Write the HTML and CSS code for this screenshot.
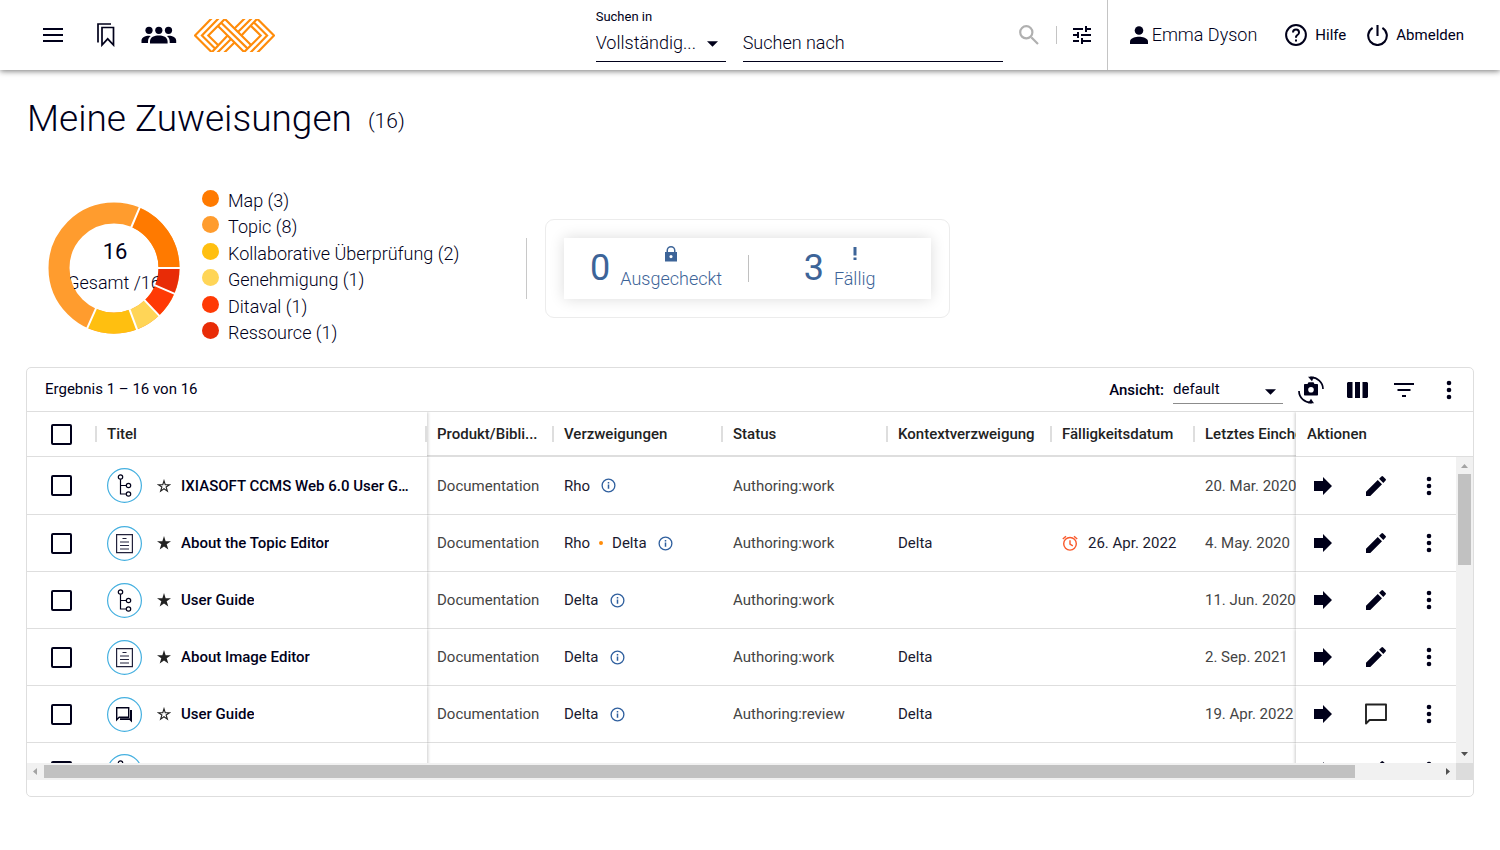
FILE: index.html
```html
<!DOCTYPE html>
<html lang="de">
<head>
<meta charset="utf-8">
<title>Meine Zuweisungen</title>
<link rel="stylesheet" href="styles.css">
</head>
<body>
<svg class="sprite" aria-hidden="true">
  <symbol id="i-arrow" viewBox="0 0 20 20"><path d="M1 5h9V1l9 9-9 9v-4H1z"/></symbol>
  <symbol id="i-pencil" viewBox="0 0 24 24"><path d="M2 17.750V22h4.250L18 10.250 13.750 6 2 17.750zM21.600 6.600a1.200 1.200 0 0 0 0-1.700L19.100 2.400a1.200 1.200 0 0 0-1.700 0L15.100 4.700l4.200 4.200 2.300-2.300z"/></symbol>
  <symbol id="i-more" viewBox="0 0 24 24"><circle cx="12" cy="5" r="2.300"/><circle cx="12" cy="12" r="2.300"/><circle cx="12" cy="19" r="2.300"/></symbol>
  <symbol id="i-comment" viewBox="0 0 24 24"><path fill="none" stroke="#222" stroke-width="1.900" stroke-linejoin="round" d="M2 2.500h20v15.500H5.500L2 21.500z"/></symbol>
  <symbol id="i-caret" viewBox="0 0 12 6"><path d="M0 0h12L6 6z"/></symbol>
  <symbol id="i-star" viewBox="0 0 24 24"><path d="M12 17.800 19.400 23l-2.800-8.900L24 9h-9.200L12 0 9.200 9H0l7.400 5.100L4.600 23z"/></symbol>
  <symbol id="i-star-o" viewBox="0 0 24 24"><path fill="none" stroke="currentColor" stroke-width="1.900" d="M12 16.700 17.800 20.900l-2.200-7.200L21.500 9.800h-7.400L12 3 9.900 9.800H2.500l5.900 3.900-2.200 7.200z"/></symbol>
  <symbol id="i-info" viewBox="0 0 16 16"><circle cx="8" cy="8" r="6.800" fill="none" stroke="currentColor" stroke-width="1.400"/><path d="M7.200 7h1.600v4.500H7.200zM7.200 4.300h1.600v1.500H7.200z"/></symbol>
  <symbol id="i-map" viewBox="0 0 35 35"><circle class="ring" cx="17.500" cy="17.500" r="16.900"/><g fill="none" stroke="#00001a" stroke-width="1.200"><circle cx="13.500" cy="9" r="2.200"/><circle cx="21.500" cy="17.500" r="2.200"/><circle cx="21.500" cy="26" r="2.200"/><path d="M13.500 11.200V26h5.800M13.500 17.500h5.800"/></g></symbol>
  <symbol id="i-topic" viewBox="0 0 35 35"><circle class="ring" cx="17.500" cy="17.500" r="16.900"/><path fill="none" stroke="#22223c" stroke-width="1.200" d="M9.600 8.600h15.800v18H9.600zM15.500 12.500h4M13 16h9M13 19.500h9M13 23h9"/></symbol>
  <symbol id="i-review" viewBox="0 0 35 35"><circle class="ring" cx="17.500" cy="17.500" r="16.900"/><path fill="none" stroke="#00001a" stroke-width="1.400" d="M9.700 10.700h12v9.600H12.200l-2.500 2.500z"/><path d="M23 13h2v12.500L22.500 23H13v-1.700h10z"/></symbol>
</svg>

<header class="topbar">
  <nav class="main-nav" aria-label="Hauptnavigation">
    <button class="icon-btn" aria-label="Menü"><svg width="20" height="14" viewBox="0 0 20 14"><path d="M0 0h20v2H0zM0 6h20v2H0zM0 12h20v2H0z"/></svg></button>
    <button class="icon-btn nav-marks" aria-label="Lesezeichen"><svg width="18" height="24" viewBox="0 0 18 24"><path fill="none" stroke="currentColor" stroke-width="1.700" d="M1 19.500V1h13M5 4.500h11.500v17.500L10.700 15.800 5 22z"/></svg></button>
    <button class="icon-btn nav-groups" aria-label="Gruppen"><svg width="36" height="18" viewBox="0 0 36 18"><circle cx="8" cy="4.300" r="3.600"/><circle cx="17.800" cy="4.300" r="3.600"/><circle cx="27.500" cy="4.300" r="3.600"/><path d="M9 17.500v-2c0-4.500 4.500-6 8.800-6s8.800 1.500 8.800 6v2zM.5 17v-2.500c0-3 3.500-4.700 7.500-4.700l1.800.2c-1.700 1.300-2.800 3-2.800 5.500V17zM35.200 17v-2.500c0-3-3.500-4.700-7.500-4.700l-1.800.2c1.700 1.300 2.800 3 2.800 5.500V17z"/></svg></button>
    <a class="logo" href="#" aria-label="Startseite"><svg width="81" height="33" viewBox="193.500 19 82 33"><g fill="none" stroke="#ff8c0a" stroke-width="2.200"><path d="M211.500 18 194.500 35.500 211.500 52.500 227.500 35.500M218.500 18 201.500 35.500 214.500 48.500M225.500 18 208 35.500 217.800 45.200M217 53 231 39M224 53 234.500 42.500"/><path d="M225 19 251.200 45.200M221 22.500 247.800 48.800M217.800 25.800 244.500 52.500"/><path d="M257.500 53 274.500 35.500 257.500 18.500 241.500 35.500M250.500 53 267.500 35.500 254.500 22.500M243.500 53 261 35.500 251.200 25.800M252 18 238 32M245 18 234.500 28.500"/></g></svg></a>
  </nav>
  <form class="search">
    <div class="scope">
      <label for="scope">Suchen in</label>
      <div class="select-wrap"><select id="scope"><option>Vollständig...</option></select><svg class="caret" width="11" height="6"><use href="#i-caret"/></svg></div>
    </div>
    <input class="query" type="text" aria-label="Suchen nach" placeholder="Suchen nach">
    <button class="icon-btn find" type="button" aria-label="Suchen"><svg width="20" height="20" viewBox="0 0 20 20"><path fill="none" stroke="currentColor" stroke-width="2.200" d="M12.500 12.500 19 19M7.300 1.200a6.100 6.100 0 1 1 0 12.200 6.100 6.100 0 0 1 0-12.200z"/></svg></button>
    <button class="icon-btn tune" type="button" aria-label="Erweiterte Suche"><svg width="18" height="18" viewBox="3 3 18 18"><path d="M3 17v2h6v-2H3zM3 5v2h10V5H3zm10 16v-2h8v-2h-8v-2h-2v6h2zM7 9v2H3v2h4v2h2V9H7zm14 4v-2H11v2h10zm-6-4h2V7h4V5h-4V3h-2v6z"/></svg></button>
  </form>
  <div class="account">
    <a class="user" href="#"><svg width="18" height="18" viewBox="0 0 18 18"><circle cx="9" cy="4.500" r="4.300"/><path d="M0 18v-2.500C0 12 6 10.700 9 10.700s9 1.300 9 4.800V18z"/></svg>Emma Dyson</a>
    <a class="link help" href="#"><svg width="22" height="22" viewBox="0 0 22 22"><circle cx="11" cy="11" r="9.900" fill="none" stroke="currentColor" stroke-width="2"/><path d="M10 15.500h2v2h-2zM11 4.500a4 4 0 0 0-4 4h2a2 2 0 1 1 4 0c0 2-3 1.800-3 5.200h2c0-2.300 3-2.600 3-5.200a4 4 0 0 0-4-4z"/></svg>Hilfe</a>
    <a class="link" href="#"><svg width="21" height="22" viewBox="0 0 21 22"><path fill="none" stroke="currentColor" stroke-width="2.100" d="M10.500 1v11M5.600 3.800a9.300 9.300 0 1 0 9.800 0"/></svg>Abmelden</a>
  </div>
</header>

<main>
  <h1>Meine Zuweisungen <span class="total">(16)</span></h1>

  <section class="summary">
    <svg class="donut" width="132" height="132" viewBox="0 0 132 132" role="img" aria-label="Zuweisungen nach Typ">
      <defs><clipPath id="hole"><circle cx="66" cy="66" r="45"/></clipPath></defs>
      <g fill="none" stroke-width="21">
        <circle cx="66" cy="66" r="55" stroke="#ff9c2e"/>
        <path stroke="#ff7a00" d="M87.490 15.370A55 55 0 0 1 121 66"/>
        <path stroke="#e82c07" d="M121 66A55 55 0 0 1 116.630 87.490"/>
        <path stroke="#ff3a05" d="M116.630 87.490A55 55 0 0 1 103.860 105.900"/>
        <path stroke="#ffd557" d="M103.860 105.900A55 55 0 0 1 85.260 117.520"/>
        <path stroke="#ffbf10" d="M85.260 117.520A55 55 0 0 1 43.630 116.240"/>
      </g>
      <path stroke="#fff" stroke-width="2" d="M110 66h22M106.500 83.190l22.090 9.380M96.290 97.920l16.520 17.410M81.410 107.210l8.400 22.480M48.100 106.190l-9.760 21.920M83.190 25.500l9.380-22.090"/>
      <g clip-path="url(#hole)" text-anchor="middle"><text class="donut-num" x="67" y="57">16</text><text class="donut-cap" x="66" y="87">Gesamt /16</text></g>
    </svg>
    <ul class="legend">
      <li><i class="dot map"></i>Map (3)</li>
      <li><i class="dot topic"></i>Topic (8)</li>
      <li><i class="dot collab"></i>Kollaborative Überprüfung (2)</li>
      <li><i class="dot approval"></i>Genehmigung (1)</li>
      <li><i class="dot ditaval"></i>Ditaval (1)</li>
      <li><i class="dot resource"></i>Ressource (1)</li>
    </ul>
    <div class="rule"></div>
    <div class="stats">
      <div class="stats-inner">
        <button class="stat"><span class="stat-num">0</span><span class="stat-text"><svg width="12" height="16" viewBox="0 0 12 16"><path fill-rule="evenodd" d="M0 6h1.500V4.500a4.500 4.500 0 0 1 9 0V6H12v9.500H0zM3 6h6V4.500a3 3 0 0 0-6 0zM6 9a1.600 1.600 0 1 0 0 3.200A1.600 1.600 0 0 0 6 9z"/></svg>Ausgecheckt</span></button>
        <button class="stat"><span class="stat-num">3</span><span class="stat-text"><svg width="4" height="16" viewBox="0 0 4 16"><path d="M.5 1h3v8.500h-3zM.5 11.500h3v2.500h-3z"/></svg>Fällig</span></button>
      </div>
    </div>
  </section>

  <section class="card">
    <div class="toolbar">
      <span class="range">Ergebnis 1 – 16 von 16</span>
      <label class="view-label" for="view">Ansicht:</label>
      <div class="select-wrap view"><select id="view"><option>default</option></select><svg class="caret" width="11" height="6"><use href="#i-caret"/></svg></div>
      <button class="icon-btn" aria-label="Ansicht speichern"><svg width="26" height="28" viewBox="0 0 26 28"><path fill-rule="evenodd" d="M7 8h2.500l1-1.800h5l1 1.800H19c.6 0 1 .4 1 1v9.500c0 .6-.4 1-1 1H7c-.6 0-1-.4-1-1V9c0-.6.400-1 1-1zm6 3a2.800 2.800 0 1 0 0 5.600 2.800 2.800 0 0 0 0-5.600z"/><path fill="none" stroke="currentColor" stroke-width="1.700" d="M12 1.500c7.500-.5 13 5 13 11.500M14 26.500C6.500 27 1 21.500 1 15"/><path d="M10 .8h6l-2 4.500zM16 27.200h-6l3-4.500z"/></svg></button>
      <button class="icon-btn" aria-label="Spalten"><svg width="21" height="16" viewBox="0 0 21 16"><path d="M1 0h4.500v16H1l-1-1V1zM8 0h5v16H8zM15.500 0H20l1 1v14l-1 1h-4.500z"/></svg></button>
      <button class="icon-btn wide" aria-label="Filter"><svg width="20" height="14" viewBox="0 0 20 14"><path d="M0 0h20v2H0zM3.500 6h13v2h-13zM8 12h4v2H8z"/></svg></button>
      <button class="icon-btn" aria-label="Mehr"><svg width="24" height="24"><use href="#i-more"/></svg></button>
    </div>

    <div class="grid">
      <div class="viewport">
        <table>
          <colgroup><col class="c-check"><col class="c-title"><col class="c-product"><col class="c-branch"><col class="c-status"><col class="c-context"><col class="c-due"><col class="c-last"><col class="c-actions"></colgroup>
          <thead>
            <tr>
              <th class="check"><input type="checkbox" aria-label="Alle auswählen"></th>
              <th class="title"><span class="bar end">Titel</span></th>
              <th class="thick first">Produkt/Bibli...</th>
              <th class="thick"><span class="bar">Verzweigungen</span></th>
              <th class="thick"><span class="bar">Status</span></th>
              <th class="thick"><span class="bar">Kontextverzweigung</span></th>
              <th class="thick"><span class="bar">Fälligkeitsdatum</span></th>
              <th class="thick"><span class="bar">Letztes Einchecken</span></th>
              <th class="actions">Aktionen</th>
            </tr>
          </thead>
          <tbody>
            <tr>
              <td class="check"><input type="checkbox" aria-label="Auswählen"></td>
              <td class="title"><div class="name"><svg class="type"><use href="#i-map"/></svg><svg class="star"><use href="#i-star-o"/></svg><a href="#">IXIASOFT CCMS Web 6.0 User Guide</a></div></td>
              <td class="first">Documentation</td>
              <td class="dark"><div class="branch">Rho<svg class="info"><use href="#i-info"/></svg></div></td>
              <td>Authoring:work</td><td class="dark"></td><td class="dark"></td><td>20. Mar. 2020</td>
              <td class="actions"><div class="acts"><button class="icon-btn" aria-label="Öffnen"><svg><use href="#i-arrow"/></svg></button><button class="icon-btn edit" aria-label="Bearbeiten"><svg><use href="#i-pencil"/></svg></button><button class="icon-btn more" aria-label="Mehr"><svg><use href="#i-more"/></svg></button></div></td>
            </tr>
            <tr>
              <td class="check"><input type="checkbox" aria-label="Auswählen"></td>
              <td class="title"><div class="name"><svg class="type"><use href="#i-topic"/></svg><svg class="star"><use href="#i-star"/></svg><a href="#">About the Topic Editor</a></div></td>
              <td class="first">Documentation</td>
              <td class="dark"><div class="branch">Rho<span class="sep"></span>Delta<svg class="info"><use href="#i-info"/></svg></div></td>
              <td>Authoring:work</td><td class="dark">Delta</td>
              <td class="dark"><div class="due"><svg width="16" height="16" viewBox="0 0 16 16"><g fill="none" stroke="#f9592b" stroke-width="1.400"><circle cx="8" cy="8.800" r="6.300"/><path d="M8 5.200v4l2.800 1.700M.8 4 4 1.200M15.200 4 12 1.200"/></g></svg>26. Apr. 2022</div></td>
              <td>4. May. 2020</td>
              <td class="actions"><div class="acts"><button class="icon-btn" aria-label="Öffnen"><svg><use href="#i-arrow"/></svg></button><button class="icon-btn edit" aria-label="Bearbeiten"><svg><use href="#i-pencil"/></svg></button><button class="icon-btn more" aria-label="Mehr"><svg><use href="#i-more"/></svg></button></div></td>
            </tr>
            <tr>
              <td class="check"><input type="checkbox" aria-label="Auswählen"></td>
              <td class="title"><div class="name"><svg class="type"><use href="#i-map"/></svg><svg class="star"><use href="#i-star"/></svg><a href="#">User Guide</a></div></td>
              <td class="first">Documentation</td>
              <td class="dark"><div class="branch">Delta<svg class="info"><use href="#i-info"/></svg></div></td>
              <td>Authoring:work</td><td class="dark"></td><td class="dark"></td><td>11. Jun. 2020</td>
              <td class="actions"><div class="acts"><button class="icon-btn" aria-label="Öffnen"><svg><use href="#i-arrow"/></svg></button><button class="icon-btn edit" aria-label="Bearbeiten"><svg><use href="#i-pencil"/></svg></button><button class="icon-btn more" aria-label="Mehr"><svg><use href="#i-more"/></svg></button></div></td>
            </tr>
            <tr>
              <td class="check"><input type="checkbox" aria-label="Auswählen"></td>
              <td class="title"><div class="name"><svg class="type"><use href="#i-topic"/></svg><svg class="star"><use href="#i-star"/></svg><a href="#">About Image Editor</a></div></td>
              <td class="first">Documentation</td>
              <td class="dark"><div class="branch">Delta<svg class="info"><use href="#i-info"/></svg></div></td>
              <td>Authoring:work</td><td class="dark">Delta</td><td class="dark"></td><td>2. Sep. 2021</td>
              <td class="actions"><div class="acts"><button class="icon-btn" aria-label="Öffnen"><svg><use href="#i-arrow"/></svg></button><button class="icon-btn edit" aria-label="Bearbeiten"><svg><use href="#i-pencil"/></svg></button><button class="icon-btn more" aria-label="Mehr"><svg><use href="#i-more"/></svg></button></div></td>
            </tr>
            <tr>
              <td class="check"><input type="checkbox" aria-label="Auswählen"></td>
              <td class="title"><div class="name"><svg class="type"><use href="#i-review"/></svg><svg class="star"><use href="#i-star-o"/></svg><a href="#">User Guide</a></div></td>
              <td class="first">Documentation</td>
              <td class="dark"><div class="branch">Delta<svg class="info"><use href="#i-info"/></svg></div></td>
              <td>Authoring:review</td><td class="dark">Delta</td><td class="dark"></td><td>19. Apr. 2022</td>
              <td class="actions"><div class="acts"><button class="icon-btn" aria-label="Öffnen"><svg><use href="#i-arrow"/></svg></button><button class="icon-btn edit" aria-label="Kommentieren"><svg><use href="#i-comment"/></svg></button><button class="icon-btn more" aria-label="Mehr"><svg><use href="#i-more"/></svg></button></div></td>
            </tr>
            <tr>
              <td class="check"><input type="checkbox" aria-label="Auswählen"></td>
              <td class="title"><div class="name"><svg class="type"><use href="#i-map"/></svg></div></td>
              <td class="first"></td><td class="dark"></td><td></td><td class="dark"></td><td class="dark"></td><td></td>
              <td class="actions"><div class="acts"><button class="icon-btn" aria-label="Öffnen"><svg><use href="#i-arrow"/></svg></button><button class="icon-btn edit" aria-label="Bearbeiten"><svg><use href="#i-pencil"/></svg></button><button class="icon-btn more" aria-label="Mehr"><svg><use href="#i-more"/></svg></button></div></td>
            </tr>
          </tbody>
        </table>
      </div>
      <div class="vscroll" aria-hidden="true">
        <div class="vhead"></div>
        <div class="vtrack"><svg width="7" height="4" viewBox="0 0 7 4"><path fill="#a3a3a3" d="M0 4 3.500 0 7 4z"/></svg><div class="vthumb"></div><svg class="down" width="7" height="4" viewBox="0 0 7 4"><path fill="#505050" d="M0 0h7L3.500 4z"/></svg></div>
      </div>
    </div>
    <div class="hscroll" aria-hidden="true">
      <svg width="4" height="7" viewBox="0 0 4 7"><path fill="#a3a3a3" d="M4 0v7L0 3.500z"/></svg>
      <div class="hrail"><div class="hthumb"></div></div>
      <svg width="4" height="7" viewBox="0 0 4 7"><path fill="#505050" d="M0 0v7l4-3.500z"/></svg>
      <div class="corner"></div>
    </div>
  </section>
</main>
</body>
</html>
```
FILE: styles.css
```css
* { box-sizing: border-box; }

body {
  margin: 0;
  background: #fff;
  color: #00001a;
  font: 400 15px/20px Roboto, "Liberation Sans", sans-serif;
}

a { color: inherit; text-decoration: none; }
svg { display: block; flex: none; fill: currentColor; }
button, select, input { font: inherit; color: inherit; }
.sprite { position: absolute; width: 0; height: 0; }

.icon-btn {
  display: flex;
  align-items: center;
  justify-content: center;
  padding: 0;
  border: 0;
  background: none;
}

/* top bar */
.topbar {
  display: flex;
  height: 70px;
  background: #fff;
  box-shadow: 0 1px 6px rgba(0, 0, 0, .55);
}

.main-nav { display: flex; align-items: center; padding-left: 43px; }
.nav-marks { margin-left: 34px; }
.nav-groups { margin-left: 26px; }
.logo { margin-left: 17px; }

.search { display: flex; margin-left: auto; }
.scope { width: 130px; padding-top: 9px; }
.scope label { display: block; font-size: 13px; line-height: 16px; }

.select-wrap { position: relative; border-bottom: 1px solid #00001a; }
.select-wrap select {
  display: block;
  width: 100%;
  height: 36px;
  padding: 0;
  border: 0;
  background: none;
  appearance: none;
  font-size: 18px;
  font-weight: 300;
}
.caret { position: absolute; right: 8px; top: 16px; pointer-events: none; }

.query {
  width: 260px;
  height: 38px;
  margin: 24px 0 0 17px;
  padding: 0;
  border: 0;
  border-bottom: 1px solid #00001a;
  background: none;
  font-size: 18px;
  font-weight: 300;
}
.query::placeholder { color: #00001a; opacity: 1; }
.find { margin-left: 16px; color: #b0b0b0; }
.tune { padding: 0 16px 0 0; margin-left: 17px; }
.tune::before { content: ""; height: 18px; margin-right: 16px; border-left: 1px solid #c4c4c4; }

.account {
  display: flex;
  align-items: center;
  padding: 0 36px 0 22px;
  border-left: 1px solid #c4c4c4;
}
.user { display: flex; align-items: center; gap: 4px; padding-bottom: 1px; font-size: 18px; font-weight: 300; }
.link { display: flex; align-items: center; gap: 8px; }
.help { margin: 0 21px 0 28px; }

/* heading */
main { padding: 0 26px; }
h1 {
  margin: 27px 0 0 1px;
  font-weight: 300;
  font-size: 37px;
  line-height: 44px;
}
.total { margin-left: 7px; font-size: 21px; line-height: 24px; vertical-align: 3px; }

/* summary */
.summary { display: flex; align-items: center; height: 156px; margin-top: 49px; padding-left: 22px; }
.donut-num { font-size: 22px; }
.donut-cap { font-size: 18px; font-weight: 300; }

.legend {
  display: flex;
  flex-direction: column;
  justify-content: space-between;
  align-self: stretch;
  margin: 0 67px 2px 22px;
  padding: 0;
  list-style: none;
  font-size: 18px;
  font-weight: 300;
  line-height: 22px;
}
.legend li { display: flex; gap: 9px; }
.dot { width: 17px; height: 17px; border-radius: 50%; }
.dot.map { background: #ff7a00; }
.dot.topic { background: #ff9c2e; }
.dot.collab { background: #ffbf10; }
.dot.approval { background: #ffd557; }
.dot.ditaval { background: #ff3a05; }
.dot.resource { background: #e82c07; }

.rule { height: 61px; border-left: 1px solid #c8c8c8; }
.stats { margin-left: 18px; padding: 18px; border: 1px solid #ececec; border-radius: 9px; }
.stats-inner { display: flex; width: 367px; height: 61px; box-shadow: 0 0 14px rgba(0, 0, 0, .14); }
.stat {
  position: relative;
  display: flex;
  flex: 1;
  align-items: center;
  justify-content: center;
  gap: 10px;
  padding: 0;
  border: 0;
  background: none;
  color: #3d6498;
}
.stat + .stat::before {
  content: "";
  position: absolute;
  left: 0;
  top: 17px;
  height: 27px;
  border-left: 1px solid #c0c0c0;
}
.stat-num { font-size: 36px; line-height: 58px; }
.stat-text { display: flex; flex-direction: column; align-items: center; gap: 5px; font-size: 18px; font-weight: 300; line-height: 24px; }

/* result card */
.card { margin-top: 21px; padding-bottom: 16px; border: 1px solid #dedede; border-radius: 5px; }
.toolbar { display: flex; align-items: center; height: 44px; padding: 0 12px 0 18px; border-bottom: 1px solid #dedede; }
.range { margin-right: auto; padding-bottom: 2px; }
.view-label { font-weight: 500; margin-right: 9px; }
.view { width: 110px; margin-right: 15px; border-color: #8c8c8c; }
.view select { height: 27px; font-size: 15px; font-weight: 400; }
.view .caret { right: 7px; top: 13px; }
.toolbar .icon-btn + .icon-btn { margin-left: 23px; }
.toolbar .icon-btn.wide { margin-left: 26px; }

.grid { display: flex; }
.viewport { flex: 1; min-width: 0; height: calc(100vh - 499px); min-height: 160px; overflow: hidden; }

table { width: 100%; table-layout: fixed; border-collapse: separate; border-spacing: 0; }
.c-check { width: 68px; }
.c-title { width: 332px; }
.c-product { width: 125px; }
.c-branch { width: 169px; }
.c-status { width: 165px; }
.c-context { width: 164px; }
.c-due { width: 143px; }
.c-actions { width: 160px; }

th, td {
  padding: 0 0 0 12px;
  overflow: hidden;
  border-bottom: 1px solid #dedede;
  text-align: left;
  white-space: nowrap;
}
th { height: 45px; padding-left: 0; color: #222; font-weight: 500; }
th.thick { border-bottom-width: 2px; }
th.first, td.first { padding-left: 10px; }
th.actions { padding-left: 11px; }
td { height: 57px; color: #444; }
tbody tr:first-child td { height: 58px; }
td.dark { color: #1a1a30; }
th.check, td.check { padding-left: 24px; }
th.title, td.title { position: relative; overflow: visible; box-shadow: 1px 0 3px rgba(0, 0, 0, .2); clip-path: inset(0 -4px 0 0); }
th.actions, td.actions { box-shadow: -1px 0 3px rgba(0, 0, 0, .2); clip-path: inset(0 0 0 -4px); overflow: visible; }
.bar { display: block; overflow: hidden; padding-left: 10px; border-left: 2px solid #dedede; line-height: 16px; }
.bar.end { border-right: 2px solid #dedede; }

input[type="checkbox"] {
  display: block;
  width: 21px;
  height: 21px;
  margin: 0;
  border: 2px solid #00001a;
  border-radius: 2px;
  appearance: none;
}

.name { display: flex; align-items: center; padding-right: 13px; color: #00001a; font-weight: 500; }
.name a { overflow: hidden; text-overflow: ellipsis; }
.type { width: 35px; height: 35px; margin-right: 15px; }
.ring { fill: none; stroke: #45b0e0; stroke-width: 1.2px; }
.star { width: 14px; height: 14px; margin-right: 10px; color: #222; }
.branch { display: flex; align-items: center; }
.info { width: 15px; height: 15px; margin-left: 11px; color: #2f5f9e; }
.sep { width: 4px; height: 4px; margin: 0 9px; border-radius: 50%; background: #ff8c0a; }
.due { display: flex; align-items: center; gap: 10px; }

.acts { display: flex; gap: 29px; padding-left: 3px; color: #00001a; }
.acts .icon-btn { width: 24px; height: 24px; }
.acts svg { width: 20px; height: 20px; }
.acts .edit svg, .acts .more svg { width: 24px; height: 24px; }

/* scroll bars */
.vscroll { display: flex; flex-direction: column; width: 17px; }
.vhead { height: 45px; border-bottom: 1px solid #dedede; }
.vtrack { display: flex; flex: 1; flex-direction: column; align-items: center; padding: 7px 0; background: #f1f1f1; }
.vthumb { width: 13px; height: 31%; margin-top: 6px; background: #c1c1c1; }
.down { margin-top: auto; }
.hscroll { display: flex; align-items: center; height: 17px; padding-left: 6px; background: #f1f1f1; }
.hrail { flex: 1; margin: 0 7px; }
.hthumb { width: 94%; height: 13px; background: #c1c1c1; }
.corner { width: 17px; height: 17px; margin-left: 6px; background: #dcdcdc; }
```
